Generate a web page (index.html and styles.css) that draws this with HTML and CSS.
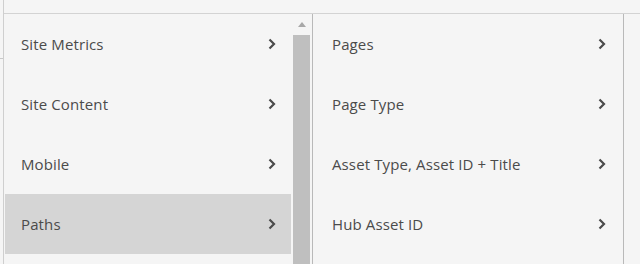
FILE: index.html
```html
<!DOCTYPE html>
<html>
<head>
<meta charset="utf-8">
<link rel="stylesheet" href="styles.css">
</head>
<body>
<div class="page">
  <div class="gutter"><div class="gutter-line"></div></div>
  <div class="frame">
    <div class="header"></div>
    <div class="menus">
      <div class="menu menu-left">
        <ul class="list">
          <li class="item"><span>Site Metrics</span><svg class="chev" viewBox="0 0 8 12" width="8" height="12"><path d="M1.5 1.5 L6 6 L1.5 10.5" fill="none" stroke="#4b4b4b" stroke-width="2.2"/></svg></li>
          <li class="item"><span>Site Content</span><svg class="chev" viewBox="0 0 8 12" width="8" height="12"><path d="M1.5 1.5 L6 6 L1.5 10.5" fill="none" stroke="#4b4b4b" stroke-width="2.2"/></svg></li>
          <li class="item"><span>Mobile</span><svg class="chev" viewBox="0 0 8 12" width="8" height="12"><path d="M1.5 1.5 L6 6 L1.5 10.5" fill="none" stroke="#4b4b4b" stroke-width="2.2"/></svg></li>
          <li class="item active"><span>Paths</span><svg class="chev" viewBox="0 0 8 12" width="8" height="12"><path d="M1.5 1.5 L6 6 L1.5 10.5" fill="none" stroke="#4b4b4b" stroke-width="2.2"/></svg></li>
        </ul>
        <div class="scrollbar">
          <div class="arrow"></div>
          <div class="thumb"></div>
        </div>
      </div>
      <div class="menu menu-right">
        <ul class="list">
          <li class="item"><span>Pages</span><svg class="chev" viewBox="0 0 8 12" width="8" height="12"><path d="M1.5 1.5 L6 6 L1.5 10.5" fill="none" stroke="#4b4b4b" stroke-width="2.2"/></svg></li>
          <li class="item"><span>Page Type</span><svg class="chev" viewBox="0 0 8 12" width="8" height="12"><path d="M1.5 1.5 L6 6 L1.5 10.5" fill="none" stroke="#4b4b4b" stroke-width="2.2"/></svg></li>
          <li class="item"><span>Asset Type, Asset ID + Title</span><svg class="chev" viewBox="0 0 8 12" width="8" height="12"><path d="M1.5 1.5 L6 6 L1.5 10.5" fill="none" stroke="#4b4b4b" stroke-width="2.2"/></svg></li>
          <li class="item"><span>Hub Asset ID</span><svg class="chev" viewBox="0 0 8 12" width="8" height="12"><path d="M1.5 1.5 L6 6 L1.5 10.5" fill="none" stroke="#4b4b4b" stroke-width="2.2"/></svg></li>
        </ul>
      </div>
      <div class="rest"></div>
    </div>
  </div>
</div>
</body>
</html>
```
FILE: styles.css
```css
html, body {
  margin: 0;
  padding: 0;
  background: #f5f5f5;
  height: 264px;
  overflow: hidden;
}
.page {
  display: flex;
  height: 264px;
  font-family: "Open Sans", "Noto Sans", sans-serif;
  font-size: 15px;
  letter-spacing: 0.12px;
  color: #4b4b4b;
}
.gutter {
  width: 3px;
  padding-top: 58px;
}
.gutter-line {
  height: 1px;
  background: #c9c9c9;
}
.frame {
  flex: 1;
  border-left: 1px solid #cfcfcf;
  display: flex;
  flex-direction: column;
}
.header {
  height: 13px;
  border-bottom: 1px solid #d3d3d3;
}
.menus {
  flex: 1;
  display: flex;
}
.menu {
  display: flex;
}
.menu-left {
  width: 307px;
  padding-left: 1px;
  border-right: 1px solid #b9b9b9;
}
.menu-left .list {
  width: 286px;
}
.menu-right {
  width: 310px;
  border-right: 1px solid #b9b9b9;
}
.menu-right .list {
  width: 310px;
}
.menu-right .item {
  padding: 0 17px 0 19px;
}
.list {
  list-style: none;
  margin: 0;
  padding: 0;
}
.item {
  height: 60px;
  display: flex;
  align-items: center;
  justify-content: space-between;
  padding: 0 15px 0 16px;
}
.item.active {
  background: #d5d5d5;
}
.chev {
  display: block;
}
.scrollbar {
  width: 17px;
  margin-left: 2px;
  display: flex;
  flex-direction: column;
  align-items: center;
}
.arrow {
  margin-top: 8px;
  width: 0;
  height: 0;
  border-left: 4px solid transparent;
  border-right: 4px solid transparent;
  border-bottom: 5px solid #a8a8a8;
  margin-bottom: 8px;
}
.thumb {
  width: 17px;
  flex: 1;
  background: #bfbfbf;
}
.rest {
  flex: 1;
}
```
